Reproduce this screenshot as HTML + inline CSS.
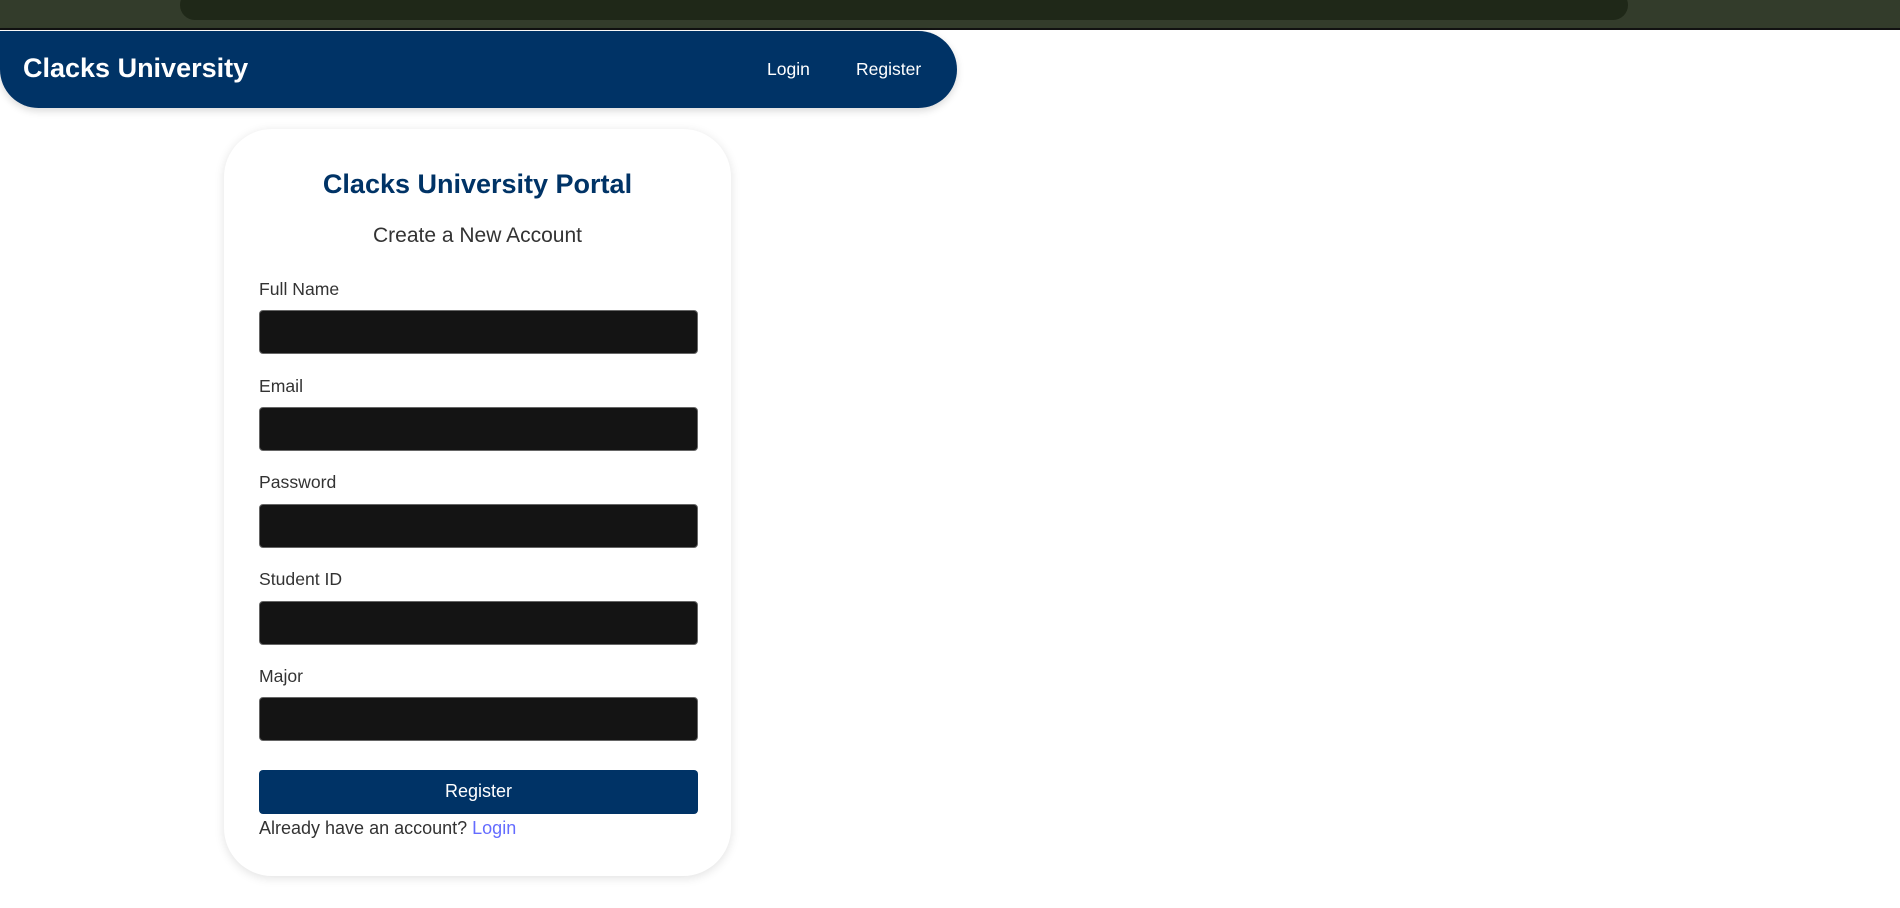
<!DOCTYPE html>
<html><head><meta charset="utf-8"><style>
*{margin:0;padding:0;box-sizing:border-box}
body{width:1900px;height:908px;background:#fff;position:relative;overflow:hidden;font-family:"Liberation Sans",Arial,sans-serif;color:#333}
.a{position:absolute;line-height:1;white-space:nowrap}
.chrome{position:absolute;left:0;top:0;width:1900px;height:30px;background:#333c2b;border-bottom:2px solid #111}
.addr{position:absolute;left:180px;top:-10px;width:1448px;height:30px;background:#1f2818;border-radius:15px}
.nav{position:absolute;left:0;top:31px;width:957px;height:77px;background:#003366;border-radius:0 40px 40px 40px;box-shadow:0 3px 8px rgba(0,0,0,.15)}
.card{position:absolute;left:224px;top:129px;width:507px;height:747px;background:#fff;border-radius:48px;box-shadow:0 2px 10px rgba(0,0,0,.12)}
.in{position:absolute;left:259px;width:439px;height:44px;background:#141414;border-radius:4px;border:1px solid #666}
.lab{font-size:17.6px;left:259px;color:#333}
</style></head><body>
<div class="chrome"><div class="addr"></div></div>
<div class="nav"></div>
<div class="a" style="left:23px;top:55px;font-size:27px;font-weight:bold;color:#fff">Clacks University</div>
<div class="a" style="left:767px;top:61px;font-size:17.5px;color:#fff">Login</div>
<div class="a" style="left:856px;top:61px;font-size:17.5px;color:#fff">Register</div>
<div class="card"></div>
<div class="a" style="left:224px;width:507px;text-align:center;top:171px;font-size:27px;font-weight:bold;color:#003366">Clacks University Portal</div>
<div class="a" style="left:224px;width:507px;text-align:center;top:225px;font-size:21px;color:#333">Create a New Account</div>
<div class="a lab" style="top:281px">Full Name</div><div class="in" style="top:310px"></div>
<div class="a lab" style="top:378px">Email</div><div class="in" style="top:407px"></div>
<div class="a lab" style="top:474px">Password</div><div class="in" style="top:504px"></div>
<div class="a lab" style="top:571px">Student ID</div><div class="in" style="top:601px"></div>
<div class="a lab" style="top:668px">Major</div><div class="in" style="top:697px"></div>
<div style="position:absolute;left:259px;top:770px;width:439px;height:44px;background:#003366;border-radius:4px"></div>
<div class="a" style="left:259px;width:439px;text-align:center;top:782px;font-size:18px;color:#fff">Register</div>
<div class="a" style="left:259px;top:819px;font-size:18px;color:#333">Already have an account? <span style="color:#646cff">Login</span></div>
</body></html>
